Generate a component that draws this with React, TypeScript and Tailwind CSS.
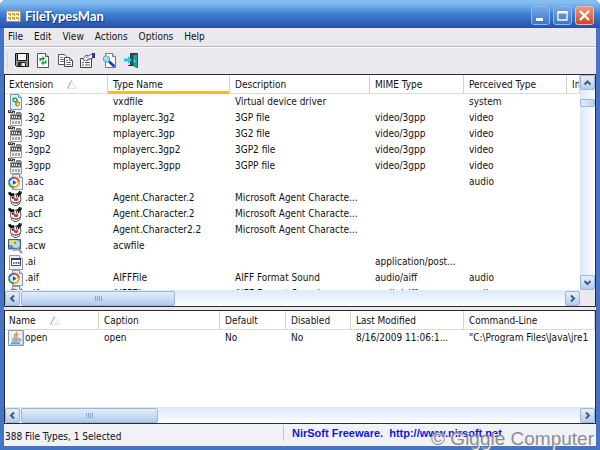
import type { ReactNode } from "react";
import clsx from "clsx";

const menus = ["File", "Edit", "View", "Actions", "Options", "Help"];

const typeColumns = [
  { name: "Extension", width: "w-[103px]" },
  { name: "Type Name", width: "w-[122px]" },
  { name: "Description", width: "w-[140px]" },
  { name: "MIME Type", width: "w-[94px]" },
  { name: "Perceived Type", width: "w-[103px]" },
  { name: "In", width: "" },
];

const actionColumns = [
  { name: "Name", width: "w-[94px]" },
  { name: "Caption", width: "w-[121px]" },
  { name: "Default", width: "w-[66px]" },
  { name: "Disabled", width: "w-[65px]" },
  { name: "Last Modified", width: "w-[113px]" },
  { name: "Command-Line", width: "" },
];

const fileTypes = [
  { icon: "driver", cells: [".386", "vxdfile", "Virtual device driver", "", "system"] },
  { icon: "clip", cells: [".3g2", "mplayerc.3g2", "3GP file", "video/3gpp", "video"] },
  { icon: "clip", cells: [".3gp", "mplayerc.3gp", "3G2 file", "video/3gpp", "video"] },
  { icon: "clip", cells: [".3gp2", "mplayerc.3gp2", "3GP2 file", "video/3gpp", "video"] },
  { icon: "clip", cells: [".3gpp", "mplayerc.3gpp", "3GPP file", "video/3gpp", "video"] },
  { icon: "media", cells: [".aac", "", "", "", "audio"] },
  { icon: "agent", cells: [".aca", "Agent.Character.2", "Microsoft Agent Characte...", "", ""] },
  { icon: "agent", cells: [".acf", "Agent.Character.2", "Microsoft Agent Characte...", "", ""] },
  { icon: "agent", cells: [".acs", "Agent.Character2.2", "Microsoft Agent Characte...", "", ""] },
  { icon: "wizard", cells: [".acw", "acwfile", "", "", ""] },
  { icon: "app", cells: [".ai", "", "", "application/post...", ""] },
  { icon: "media", cells: [".aif", "AIFFFile", "AIFF Format Sound", "audio/aiff", "audio"] },
  { icon: "media", cells: [".aifc", "AIFFFile", "AIFF Format Sound", "audio/aiff", "audio"] },
];

const actions = [
  { icon: "java", cells: ["open", "open", "No", "No", "8/16/2009 11:06:1...", '"C:\\Program Files\\Java\\jre1'] },
];

const rowIcons: Record<string, ReactNode> = {
  driver: (
    <>
      <path d="M2.5.5h8l3 3v12h-11z" fill="#e4effc" stroke="#6f96cc" />
      <path d="M10.5.5v3h3" fill="#cfe0f6" stroke="#6f96cc" />
      <path d="M4 5l2-2 3 1 1 3-2 2-3-1z" fill="#3fa54a" />
      <path d="M6 5h2v2H6z" fill="#c9efc4" />
      <path d="M7 9l2-2 3 1v3l-3 2-2-2z" fill="#b9962b" />
      <path d="M9 9h2v2H9z" fill="#fff0a8" />
    </>
  ),
  clip: (
    <>
      <path d="M2.500 4.500h11v11h-11z" fill="#f6f6f6" stroke="#9a9a9a" />
      <path d="M0 0l7 1v2.500L0 3z" fill="#3a3a3a" />
      <path d="M8 2h5l1 3H8z" fill="#8a8a8a" />
      <path d="M1 1h1v1H1zM3 1h1v1H3zM5 2h1v1H5z" fill="#ddd" />
      <path d="M3 5h10v4.500H3z" fill="#5a5a5a" />
      <path d="M4 6h1v2H4zM6 6h1v2H6zM8 6h1v2H8zM10 7h2v1h-2z" fill="#f2f2f2" />
      <path d="M4 11h2v3H4z" fill="#e8928c" />
      <path d="M7 11h2v3H7z" fill="#7cc480" />
      <path d="M10 11h2v3h-2z" fill="#9296e0" />
    </>
  ),
  media: (
    <>
      <path d="M4.5.5h7l3 3v12h-10z" fill="#eef4fd" stroke="#7b98c9" />
      <path d="M11.500.5v3h3" fill="#c5d8f2" stroke="#7b98c9" />
      <path d="M6 2.500a6 6 0 0 0-6 6h6z" fill="#3e7fd6" />
      <path d="M6 2.500a6 6 0 0 1 6 6H6z" fill="#e8622a" />
      <path d="M0 8.500a6 6 0 0 0 6 6v-6z" fill="#4aa546" />
      <path d="M12 8.500a6 6 0 0 1-6 6v-6z" fill="#f1b52c" />
      <circle cx="6" cy="8.500" r="3.600" fill="#fff" />
      <path d="M4.800 6l4 2.500-4 2.500z" fill="#2653a8" />
    </>
  ),
  agent: (
    <>
      <path d="M3 4.500l9-.5 1 5-1.500 5-3 1.500h-2l-3-2-1-4z" fill="#fff" stroke="#222" strokeWidth=".8" />
      <path d="M0 2.500L2.500 2 4 3.500 6 3v2L3 6 1 5zM8 3.500L10 3l1-2h1.500v1.500L14 1l-.5 3-2 1.500z" fill="#111" />
      <path d="M3.500 5.500c1-1 3-1 3 1s-1.500 3-2.500 2zM8 5.500c1-1.500 3.500-1 3.500.5S9.500 8 8.500 7z" fill="#151515" />
      <path d="M4.500 6h1v1.500h-1zM9 5.500h1V7H9z" fill="#fff" />
      <ellipse cx="8" cy="9.500" rx="2.200" ry="1.700" fill="#d9343c" />
      <path d="M4 11.500c2 2 5 2 7.500 0" fill="none" stroke="#111" />
      <path d="M6.500 13h3v1h-3z" fill="#e6555c" />
    </>
  ),
  wizard: (
    <>
      <path d="M.5 1.500h12v9.500H.5z" fill="#5a8fdd" stroke="#2f5fae" />
      <path d="M1 2h5v5H1z" fill="#e9dc4a" />
      <path d="M5 5h5v4H5z" fill="#7bc77a" />
      <circle cx="8" cy="6" r="3.500" fill="#cfeaf5" fillOpacity=".7" stroke="#f0e26a" />
      <path d="M6 4h2l-1 3z" fill="#2f9a4a" />
      <path d="M9.500 10l4.500 5" stroke="#8b8fd6" strokeWidth="2" />
      <path d="M3 11h5l2 2H5z" fill="#9db4d8" />
    </>
  ),
  app: (
    <>
      <path d="M1.500 1.500h10l3 3v11h-13z" fill="#efefef" stroke="#9a9a9a" />
      <path d="M11.500 1.500v3h3" fill="#fff" stroke="#9a9a9a" />
      <path d="M3.500 4.500h9v7h-9z" fill="#fff" stroke="#454d73" />
      <path d="M3 4h10v2H3z" fill="#27398b" />
      <path d="M5 8h1.500v2H5z" fill="#4b6fd0" />
      <path d="M7.500 8H9v2H7.500z" fill="#d43a2f" />
      <path d="M10 8h1.500v2H10z" fill="#2b53c4" />
    </>
  ),
  java: (
    <>
      <path d="M.5.5h15v15H.5z" fill="#e9f0f7" stroke="#7f9cba" />
      <path d="M2 14.500h12.500V2" fill="none" stroke="#b5c9dc" />
      <path d="M8.500 2c1 2-3 2.500-2 4.500.3.700 1 1 .8 1.500M10.500 4c-2 .8-2.500 1.500-1.500 2.500.500.600 0 1.200-.5 1.500" fill="none" stroke="#ef7d1a" strokeWidth="1.200" />
      <path d="M4 9h7M4.500 11h6M3 13.200h9" stroke="#4c7da3" strokeWidth="1.200" />
      <path d="M11 9c2.500-.5 2.500 2 0 2.200" fill="none" stroke="#4c7da3" />
    </>
  ),
};

const toolbar = [
  {
    name: "Save",
    icon: (
      <>
        <path d="M1.500.5h13v13h-12l-1-1z" fill="#8f8f8f" stroke="#151515" />
        <path d="M3.500.5h9v7h-9z" fill="#f4f4f4" stroke="#151515" />
        <path d="M4.500 9.500h7v4h-7z" fill="#eee" stroke="#151515" />
        <path d="M5 10h2.500v3H5z" fill="#333" />
      </>
    ),
  },
  {
    name: "Refresh",
    icon: (
      <>
        <path d="M1.500.5h8l3 3v11h-11z" fill="#fff" stroke="#555" />
        <path d="M9.500.5v3h3" fill="#ddd" stroke="#555" />
        <path d="M3.500 8V5h3V3L9 5.500 6.500 8V6.500H5V8z" fill="#169b34" />
        <path d="M10.500 7.500v3h-3v2L5 10l2.500-2.500V9H9V7.500z" fill="#169b34" />
      </>
    ),
  },
  {
    name: "Copy",
    icon: (
      <>
        <path d="M.5 1.500h6l2 2v8h-8z" fill="#fff" stroke="#555" />
        <path d="M2 4.500h3M2 6.500h4M2 8.500h4" stroke="#777" />
        <path d="M6.500 4.500h5l3 3v6h-8z" fill="#fff" stroke="#444" />
        <path d="M11.500 4.500v3h3M8 7.500h2M8 9.500h5M8 11.500h5" fill="none" stroke="#777" />
      </>
    ),
  },
  {
    name: "Properties",
    icon: (
      <>
        <path d="M.5 5.500h11v9H.5z" fill="#fff" stroke="#444" />
        <path d="M2 9.500h2M5 9.500h5M2 12h2M5 12h5" stroke="#555" />
        <path d="M3 6l3-4 3 1 2-2h2v4l-3 1-3 2-2-1-1 1H4z" fill="#f6f6f6" stroke="#444" strokeWidth=".8" />
        <path d="M12 0h3v5h-3z" fill="#3434a0" />
        <path d="M6 5l2-1.500M7 7l3-2" stroke="#777" />
      </>
    ),
  },
  {
    name: "Find",
    icon: (
      <>
        <path d="M3.500.5h7l3 3v11h-10z" fill="#fff" stroke="#777" />
        <path d="M10.500.5v3h3" fill="#ddd" stroke="#777" />
        <circle cx="4.500" cy="6" r="3.200" fill="#8be4ee" stroke="#5ba3b4" />
        <path d="M3 5.500L4.500 4" stroke="#fff" />
        <path d="M7 8.500l5.500 5" stroke="#173fc0" strokeWidth="2.500" />
      </>
    ),
  },
  {
    name: "Exit",
    icon: (
      <>
        <path d="M6.500.5h7v12h-7z" fill="#444" stroke="#333" />
        <path d="M9 2l4.500-1v14L9 12.500z" fill="#18a5a5" stroke="#0d6666" strokeWidth=".8" />
        <path d="M10 7.500h1V9h-1z" fill="#fff" />
        <path d="M0 5.500h4V3l4 4-4 4V8.500H0z" fill="#16d4dc" />
        <path d="M4 12.500h4" stroke="#333" />
      </>
    ),
  },
];

function SortMark() {
  return (
    <svg viewBox="0 0 10 9" className="ml-[14px] h-[9px] w-[10px]" aria-hidden="true">
      <path d="M4.500.5l5 8h-9z" fill="#fafafa" stroke="#e4e4e4" />
      <path d="M4.500.5l-4 8" stroke="#aaa" />
    </svg>
  );
}

type Column = { name: string; width: string };
type Row = { icon: string; cells: string[] };

function ListView({ label, columns, rows, hot }: { label: string; columns: Column[]; rows: Row[]; hot?: string }) {
  return (
    <div className="min-h-0 min-w-0 flex-1 overflow-hidden bg-white">
      <table aria-label={label} className="w-full table-fixed border-collapse">
        <thead>
          <tr>
            {columns.map((col, i) => (
              <th key={col.name} className={clsx("p-0 font-normal", col.width)}>
                <button
                  className={clsx(
                    "flex h-[19px] w-full items-center overflow-hidden whitespace-nowrap border-r border-r-[#d6d2c9]",
                    i === 0 ? "pl-1" : "pl-[5px]",
                    col.name === hot ? "border-b-[3px] border-b-[#f8b63c] pt-[3px]" : "border-b border-b-[#dedad2] pt-px",
                  )}
                >
                  {col.name}
                  {i === 0 && <SortMark />}
                </button>
              </th>
            ))}
          </tr>
        </thead>
        <tbody>
          {rows.map((row) => (
            <tr key={row.cells[0]} className="h-4">
              {row.cells.map((cell, i) => (
                <td key={i} className={clsx("overflow-hidden whitespace-nowrap p-0", i === 0 ? "pl-[3px]" : "pl-[5px]")}>
                  {i === 0 ? (
                    <span className="flex items-center gap-px">
                      <svg viewBox="0 0 16 16" className="size-4 shrink-0" aria-hidden="true">
                        {rowIcons[row.icon]}
                      </svg>
                      {cell}
                    </span>
                  ) : (
                    cell
                  )}
                </td>
              ))}
            </tr>
          ))}
        </tbody>
      </table>
    </div>
  );
}

const arrows = {
  up: "M3.500 8.500l3-3 3 3",
  down: "M3.500 5l3 3 3-3",
  left: "M8 3.500l-3 3 3 3",
  right: "M5 3.500l3 3-3 3",
};

function ScrollButton({ dir }: { dir: keyof typeof arrows }) {
  return (
    <button
      aria-label={`Scroll ${dir}`}
      className="flex size-[15px] shrink-0 items-center justify-center rounded-xs border border-[#9db6d6] bg-linear-to-b from-[#e6effb] to-[#b3cdee]"
    >
      <svg viewBox="0 0 13 13" className="size-[13px]" aria-hidden="true">
        <path d={arrows[dir]} fill="none" stroke="#4c5a70" strokeWidth="2" />
      </svg>
    </button>
  );
}

function HorizontalScroll({ thumb }: { thumb: string }) {
  return (
    <div className="flex h-4 min-w-0 flex-1 items-center bg-linear-to-b from-[#dbe9fc] to-[#fbfdff]">
      <ScrollButton dir="left" />
      <div
        className={clsx(
          "ml-px flex h-[15px] items-center justify-center gap-px rounded-xs border border-[#9db6d6] bg-linear-to-b from-[#e3edfb] to-[#b0cbed]",
          thumb,
        )}
      >
        {[0, 1, 2, 3].map((n) => (
          <span key={n} className="h-[5px] w-px bg-[#8ba3c4]" />
        ))}
      </div>
      <div className="flex-1" />
      <ScrollButton dir="right" />
    </div>
  );
}

function TitleBar() {
  const button = "flex size-[19px] items-center justify-center rounded-[3px] border border-[#8fb8ea] bg-linear-to-b from-[#78a9e4] to-[#3b74c6]";
  return (
    <header className="flex h-7 shrink-0 items-center bg-linear-to-b from-[#85bdf0] from-10% via-[#3f7fd3] via-50% to-[#264fa8] px-[6px] pt-[3px]">
      <svg viewBox="0 0 15 13" className="h-[13px] w-[15px]" aria-hidden="true">
        <path d="M.5.5h14v12H.5z" fill="#fdf9ee" stroke="#8d99ab" />
        <path d="M1 1h13v1.500H1z" fill="#7a8fb4" />
        <path d="M2 4h3v2H2zM6 4h3v2H6zM10 4h3v2h-3zM2 8h3v2H2zM6 8h3v2H6zM10 8h3v2h-3z" fill="#f0a232" />
        <path d="M4 6h1v1H4zM8 6h1v1H8zM12 6h1v1h-1zM4 10h1v1H4zM8 10h1v1H8zM12 10h1v1h-1z" fill="#d68a1c" />
      </svg>
      <h1 className="ml-1 flex-1 font-['Lato',sans-serif] text-[13px] font-bold text-white [text-shadow:1px_1px_1px_#16357c]">
        FileTypesMan
      </h1>
      <div className="flex gap-[3px]">
        <button aria-label="Minimize" className={button}>
          <svg viewBox="0 0 17 17" className="size-[17px]">
            <path d="M4 11h7v3H4z" fill="#fff" />
          </svg>
        </button>
        <button aria-label="Maximize" className={button}>
          <svg viewBox="0 0 17 17" className="size-[17px]">
            <path d="M4 5h9v8H4z" fill="none" stroke="#fff" strokeWidth="1.300" />
            <path d="M3.500 4h10v2.500h-10z" fill="#fff" />
          </svg>
        </button>
        <button
          aria-label="Close"
          className="flex size-[19px] items-center justify-center rounded-[3px] border border-[#f0b8a8] bg-linear-to-b from-[#ec9a80] to-[#d2451d]"
        >
          <svg viewBox="0 0 17 17" className="size-[17px]">
            <path d="M4 4l9 9M13 4l-9 9" stroke="#fff" strokeWidth="2.300" />
          </svg>
        </button>
      </div>
    </header>
  );
}

export default function App() {
  return (
    <div className="relative flex h-screen flex-col overflow-hidden rounded-t-md bg-[#4273c4] font-['DejaVu_Sans_Condensed','Noto_Sans',sans-serif] text-[10px] leading-4 text-[#111]">
      <TitleBar />
      <div className="flex min-h-0 flex-1 flex-col border-x-4 border-b-4 border-[#4674c4] bg-[#ebe9ed]">
        <nav aria-label="Menu" className="flex h-[19px] shrink-0 items-center gap-[11px] border-b border-[#b9b6bc] pl-1">
          {menus.map((item) => (
            <button key={item}>{item}</button>
          ))}
        </nav>
        <div className="flex h-[27px] shrink-0 items-center gap-[6px] border-t border-white pl-[3px]">
          <span className="h-5 w-px bg-[#d9d6dc]" />
          {toolbar.map((tool) => (
            <button key={tool.name} aria-label={tool.name}>
              <svg viewBox="0 0 16 16" className="size-4">
                {tool.icon}
              </svg>
            </button>
          ))}
        </div>

        <main className="flex min-h-0 flex-1 flex-col gap-[3px]">
          <section className="flex h-[233px] shrink-0 flex-col border border-[#2b2b33]">
            <div className="flex min-h-0 flex-1">
              <ListView label="File types" columns={typeColumns} rows={fileTypes} hot="Type Name" />
              <div className="flex w-[15px] shrink-0 flex-col bg-linear-to-r from-[#dbe9fc] to-[#fbfdff]">
                <ScrollButton dir="up" />
                <div className="mt-[9px] h-2 rounded-xs border border-[#9db6d6] bg-linear-to-r from-[#e3edfb] to-[#b9d1f0]" />
                <div className="flex-1" />
                <ScrollButton dir="down" />
              </div>
            </div>
            <div className="flex shrink-0">
              <HorizontalScroll thumb="w-[154px]" />
              <div className="w-[15px] shrink-0" />
            </div>
          </section>

          <section className="flex min-h-0 flex-1 flex-col border border-[#2b2b33]">
            <ListView label="Actions" columns={actionColumns} rows={actions} />
            <div className="flex shrink-0">
              <HorizontalScroll thumb="w-[137px]" />
            </div>
          </section>
        </main>

        <footer className="flex h-[22px] shrink-0 items-center bg-[#f0f2f7] pt-1">
          <span className="w-[279px] pl-px">388 File Types, 1 Selected</span>
          <a
            href="#"
            className="mb-2 whitespace-pre border-l border-[#c9c7cc] pl-2 font-['Liberation_Sans',sans-serif] text-[11px] font-bold text-[#1414e6]"
          >
            {"NirSoft Freeware.  http://www.nirsoft.net"}
          </a>
        </footer>
      </div>

      <p className="pointer-events-none absolute bottom-0 right-[6px] whitespace-nowrap font-['Liberation_Sans',sans-serif] text-[19px] leading-[22px] text-[#8d8d8d] [text-shadow:1px_1px_0_#f4f4f4]">
        © Giggle Computer
      </p>
    </div>
  );
}
